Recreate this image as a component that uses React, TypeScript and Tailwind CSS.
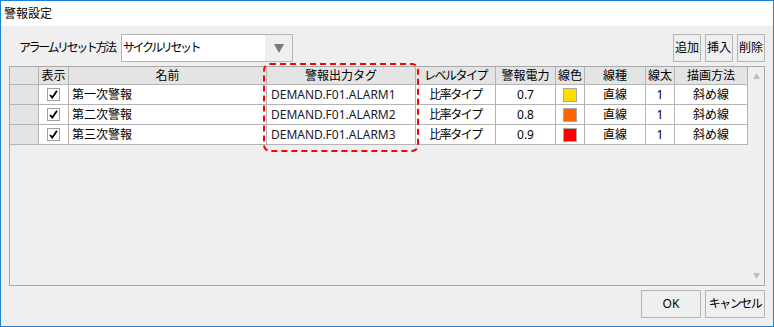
const font = "font-['Noto_Sans','Noto_Sans_CJK_JP',sans-serif]";

const cols = [
    { key: 'head', w: 'w-[29px]', label: '' },
    { key: 'show', w: 'w-[30px]', label: '表示' },
    { key: 'name', w: 'w-[198px]', label: '名前' },
    { key: 'tag', w: 'w-[149px]', label: '警報出力タグ' },
    { key: 'level', w: 'w-[80px]', label: 'レベルタイプ' },
    { key: 'power', w: 'w-[60px]', label: '警報電力' },
    { key: 'color', w: 'w-[29px]', label: '線色' },
    { key: 'line', w: 'w-[61px]', label: '線種' },
    { key: 'width', w: 'w-[29px]', label: '線太' },
    { key: 'draw', w: 'w-[73px]', label: '描画方法' },
];

const rows = [
    { name: '第一次警報', tag: 'DEMAND.F01.ALARM1', power: '0.7', color: 'bg-[#ffe000]' },
    { name: '第二次警報', tag: 'DEMAND.F01.ALARM2', power: '0.8', color: 'bg-[#ff6400]' },
    { name: '第三次警報', tag: 'DEMAND.F01.ALARM3', power: '0.9', color: 'bg-[#ff0000]' },
];

const cell = 'h-full border-r border-[#b4b4b4] flex items-center shrink-0 whitespace-nowrap';

const Button = ({ children, className = '' }: { children: React.ReactNode; className?: string }) => (
    <button
        className={`h-[28px] border border-[#b4b4b4] bg-[#efefef] text-[12px] text-black flex items-center justify-center whitespace-nowrap ${className}`}
    >
        {children}
    </button>
);

const App = () => {
    return (
        <div className={`${font} w-[774px] h-[327px] border border-[#1883d7] flex flex-col text-[12px] text-black`}>
            {/* title */}
            <div className="h-[25px] bg-white flex items-center pl-[3px] shrink-0">警報設定</div>

            <div className="flex-1 bg-[#efefef] px-[8px] pt-[8px] flex flex-col">
                {/* reset method */}
                <div className="h-[28px] flex items-center shrink-0">
                    <span className="pl-[10px] w-[112px] whitespace-nowrap tracking-[-2.4px]">アラームリセット方法</span>
                    <div className="w-[172px] h-full border border-[#b4b4b4] bg-white flex">
                        <span className="flex-1 flex items-center pl-[1px] tracking-[-2.4px] whitespace-nowrap">サイクルリセット</span>
                        <span className="w-[27px] bg-[#efefef] flex items-center justify-center">
                            <svg width="10" height="9" viewBox="0 0 10 9">
                                <path d="M0 0H10L5 9Z" fill="#7a7a7a" />
                            </svg>
                        </span>
                    </div>
                    <div className="ml-auto flex gap-[4px]">
                        <Button className="w-[28px]">追加</Button>
                        <Button className="w-[28px]">挿入</Button>
                        <Button className="w-[28px]">削除</Button>
                    </div>
                </div>

                {/* grid */}
                <div className="relative mt-[4px] h-[220px] border border-[#a8a8a8] bg-[#efefef] flex shrink-0">
                    <div className="w-[738px] flex flex-col">
                        <div className="h-[18px] flex border-b border-[#b4b4b4] bg-[#e4e4e4]">
                            {cols.map((c) => (
                                <div key={c.key} className={`${cell} ${c.w} justify-center ${c.key === 'level' ? 'tracking-[-1.5px]' : ''}`}>
                                    {c.label}
                                </div>
                            ))}
                        </div>
                        {rows.map((r) => (
                            <div key={r.name} className="h-[20px] flex border-b border-[#b4b4b4] bg-white">
                                <div className={`${cell} w-[29px] bg-[#e4e4e4]`} />
                                <div className={`${cell} w-[30px] justify-center`}>
                                    <span className="w-[13px] h-[13px] border border-[#a0a0a0] bg-white flex items-center justify-center">
                                        <svg width="9" height="9" viewBox="0 0 9 9">
                                            <path d="M1 5L3.3 7.6L8 0.8" fill="none" stroke="#000" strokeWidth="1.8" />
                                        </svg>
                                    </span>
                                </div>
                                <div className={`${cell} w-[198px] pl-[3px]`}>{r.name}</div>
                                <div className={`${cell} w-[149px] pl-[4px] text-[#1a1a2e]`}>{r.tag}</div>
                                <div className={`${cell} w-[80px] justify-center tracking-[-1.5px]`}>比率タイプ</div>
                                <div className={`${cell} w-[60px] justify-center`}>{r.power}</div>
                                <div className={`${cell} w-[29px] justify-center`}>
                                    <span className={`w-[14px] h-[14px] border border-[#a8a8a8] ${r.color}`} />
                                </div>
                                <div className={`${cell} w-[61px] justify-center`}>直線</div>
                                <div className={`${cell} w-[29px] justify-center`}>1</div>
                                <div className={`${cell} w-[73px] justify-center`}>斜め線</div>
                            </div>
                        ))}
                    </div>
                    {/* scrollbar */}
                    <div className="w-[16px] flex flex-col items-center justify-between py-[6px]">
                        <svg width="7" height="6" viewBox="0 0 7 6">
                            <path d="M0 6H7L3.5 0Z" fill="#bdbdbd" />
                        </svg>
                        <svg width="7" height="6" viewBox="0 0 7 6">
                            <path d="M0 0H7L3.5 6Z" fill="#bdbdbd" />
                        </svg>
                    </div>

                    {/* highlight */}
                    <div className="absolute left-[253px] top-[-4px] w-[156px] h-[89px] border-2 border-dashed border-[#ff0000] rounded-[7px]" />
                </div>

                {/* footer */}
                <div className="mt-[4px] flex justify-end gap-[4px]">
                    <Button className="w-[60px]">OK</Button>
                    <Button className="w-[60px] tracking-[-1.5px]">キャンセル</Button>
                </div>
            </div>
        </div>
    );
};

export default App;
